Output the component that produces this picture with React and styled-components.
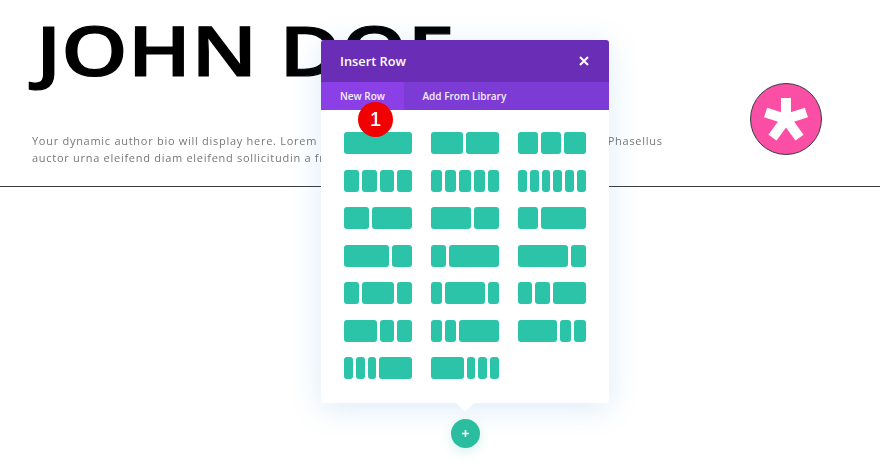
import React from "react";
import styled, { createGlobalStyle } from "styled-components";

const Global = createGlobalStyle`
  html, body { margin: 0; padding: 0; background: #fff; }
  body { width: 880px; height: 467px; overflow: hidden; font-family: "Open Sans", "Liberation Sans", sans-serif; }
`;
const Page = styled.div`position: relative; width: 880px; height: 467px; overflow: hidden; background: #fff;`;
const Header = styled.header`
  display: flex; justify-content: space-between; align-items: flex-start;
  height: 186px; padding: 0 58px 0 32px; border-bottom: 1px solid #3c3c3c;
`;
const Intro = styled.div`display: flex; flex-direction: column; width: 640px;`;
const Title = styled.h1`
  margin: 10px 0 0 4px; font: 600 68px/80px "Open Sans", sans-serif; color: #000;
  -webkit-text-stroke: 1.2px #000;
  white-space: nowrap; transform: scaleX(1.241); transform-origin: left center;
`;
const Bio = styled.p`
  margin: 42px 0 0; font: 400 11px/17px "Open Sans", sans-serif; letter-spacing: 0.72px; color: #777;
  white-space: nowrap; transform: translateZ(0);
`;
const Avatar = styled.div`
  width: 70px; height: 70px; margin-top: 83px; border-radius: 50%; background: #fb4fa5;
  border: 1px solid #3a3a48; display: flex; align-items: center; justify-content: center;
`;
const Overlay = styled.div`
  position: absolute; left: 321px; top: 40px; width: 288px;
  display: flex; flex-direction: column; align-items: center;
`;
const Panel = styled.section`
  width: 100%; height: 363px; background: #fff; border-radius: 3px;
  box-shadow: 0 5px 30px rgba(43, 135, 218, 0.17);
  display: flex; flex-direction: column;
`;
const PanelHead = styled.div`
  height: 42px; flex: none; padding: 0 20px 0 19px; background: #6a2db5; border-radius: 3px 3px 0 0;
  display: flex; justify-content: space-between; align-items: center;
  color: #fff; font: 600 12.8px "Open Sans", sans-serif;
`;
const Tabs = styled.div`display: flex; height: 28px; flex: none; background: #7d3bd6;`;
const Tab = styled.div`
  display: flex; align-items: center; padding: 0 18.5px 0 19px; color: #f4eefc;
  font: 600 10px "Open Sans", sans-serif; background: ${p => (p.$active ? "#8a40e6" : "transparent")};
`;
const Layouts = styled.div`
  display: grid; grid-template-columns: repeat(3, 68px); column-gap: 19px; row-gap: 15.5px;
  padding: 22px 23px 0;
`;
const LayoutRow = styled.div`display: flex; gap: 3px; height: 22px;`;
const Column = styled.div`flex: ${p => p.$w} 1 0; background: #2bc4a8; border-radius: 3px;`;
const Arrow = styled.div`
  width: 0; height: 0; border-left: 9px solid transparent; border-right: 9px solid transparent;
  border-top: 9px solid #fff;
`;
const AddButton = styled.div`
  width: 29px; height: 29px; margin-top: 7px; border-radius: 50%; background: #2bbd9f;
  box-shadow: 0 4px 12px rgba(43, 196, 168, 0.2);
  display: flex; align-items: center; justify-content: center;
`;
const Badge = styled.div`
  position: absolute; left: 358px; top: 102px; width: 35px; height: 35px; border-radius: 50%;
  background: #f00000; color: #fff; display: flex; align-items: center; justify-content: center;
  font: 400 20px "Liberation Sans", sans-serif; text-shadow: 0 0 0.5px #fff;
`;

const rows = [
  [[1], [32, 33], [20, 21, 22]],
  [[1, 1, 1, 1], [1, 1, 1, 1, 1], [1, 1, 1, 1, 1, 1]],
  [[25, 40], [39, 25], [20, 45]],
  [[44, 20], [15, 50], [49, 15]],
  [[15, 32, 15], [11, 39, 11], [14, 15, 33]],
  [[32, 14, 15], [11, 11, 39], [39, 11, 12]],
  [[9, 9, 8, 32], [32, 8, 9, 9]],
];

export default function App() {
  return (
    <Page>
      <Global />
      <Header>
        <Intro>
          <Title>JOHN DOE</Title>
          <Bio>
            Your dynamic author bio will display here. Lorem ipsum dolor sit amet, consectetur adipiscing elit. Phasellus
            <br />
            auctor urna eleifend diam eleifend sollicitudin a fringilla turpis. Curabitur lectus enim.
          </Bio>
        </Intro>
        <Avatar>
          <svg width="48" height="48" viewBox="0 0 48 48" fill="none" stroke="#fff" strokeWidth="10">
            <path d="M24 24V3M24 24L3.6 17.4M24 24L10.5 42.6M24 24L37.5 42.6M24 24L44.4 17.4" />
          </svg>
        </Avatar>
      </Header>
      <Overlay>
        <Panel>
          <PanelHead>
            <span>Insert Row</span>
            <svg width="10" height="10" viewBox="0 0 10 10" stroke="#fff" strokeWidth="2">
              <path d="M1 1L9 9M9 1L1 9" />
            </svg>
          </PanelHead>
          <Tabs>
            <Tab $active>New Row</Tab>
            <Tab>Add From Library</Tab>
          </Tabs>
          <Layouts>
            {rows.flat().map((cols, i) => (
              <LayoutRow key={i}>
                {cols.map((w, j) => (
                  <Column key={j} $w={w} />
                ))}
              </LayoutRow>
            ))}
          </Layouts>
        </Panel>
        <Arrow />
        <AddButton>
          <svg width="9" height="9" viewBox="0 0 9 9" stroke="#fff" strokeWidth="1.6">
            <path d="M4.5 1V8M1 4.5H8" />
          </svg>
        </AddButton>
      </Overlay>
      <Badge>1</Badge>
    </Page>
  );
}
